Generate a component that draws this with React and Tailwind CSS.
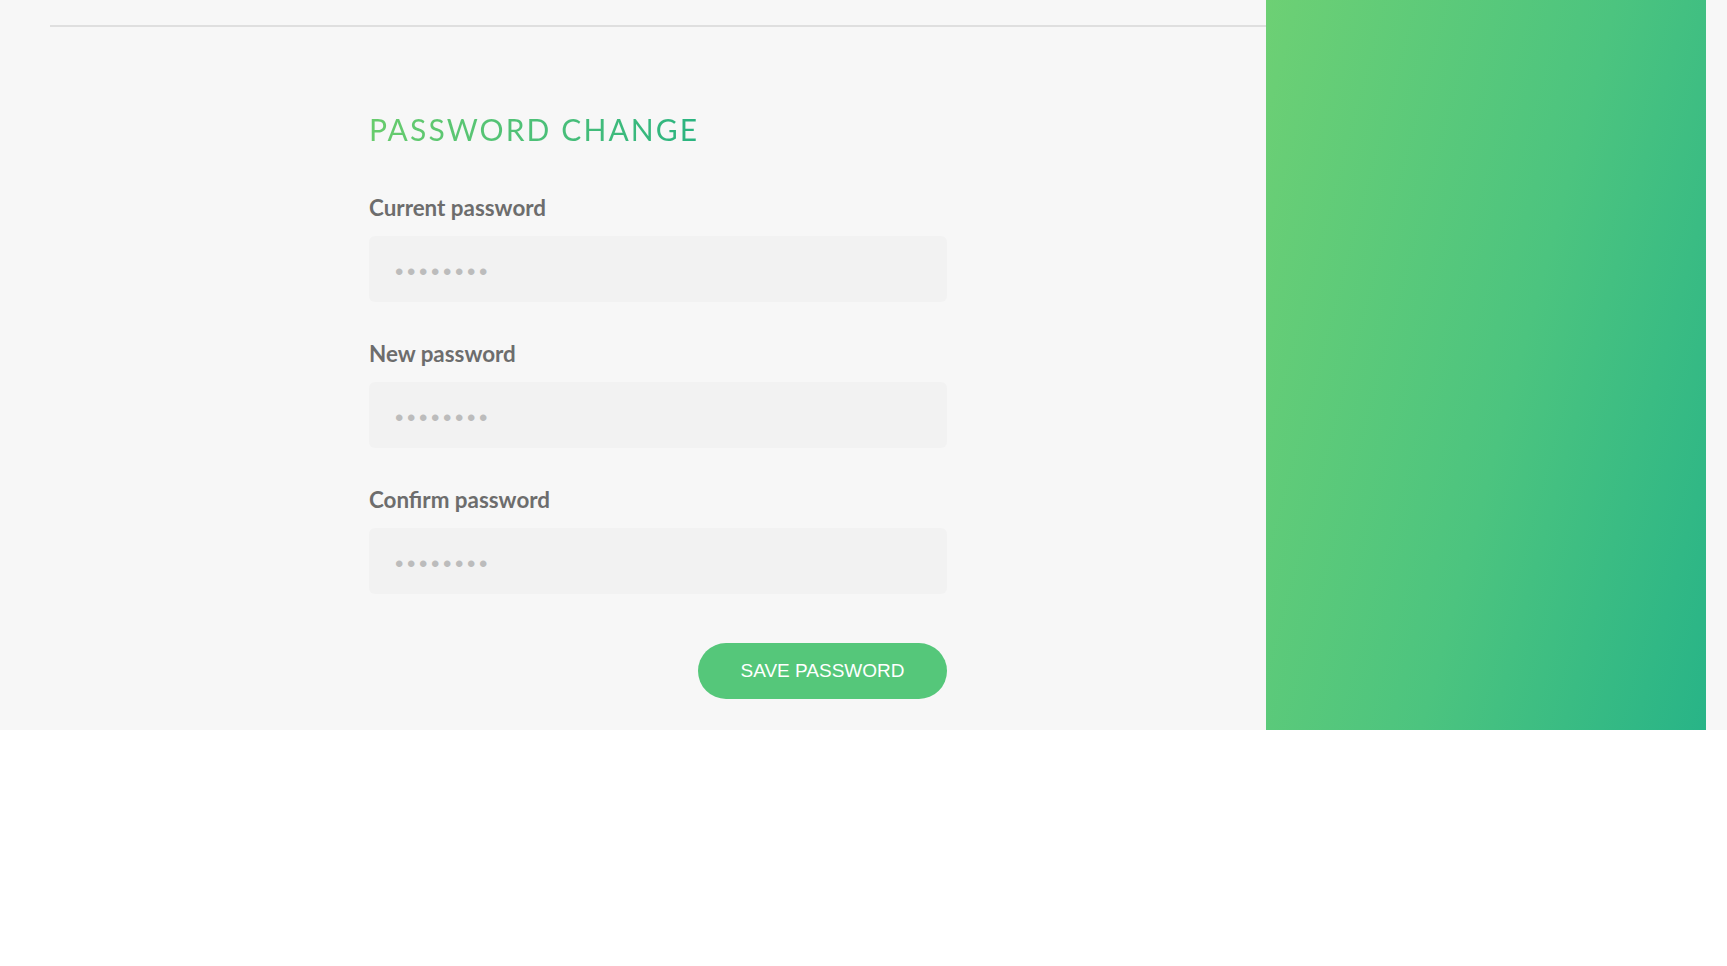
export default function App() {
  const fields = ["Current password", "New password", "Confirm password"];
  return (
    <div className="w-full bg-white" style={{ minHeight: 966 }}>
      <div className="flex h-[730px] w-full bg-[#f7f7f7]">
        <div className="flex-1 pl-[50px] pt-[25px]">
          <div className="border-t-2 border-[#dfdfdf] pl-[319px] pt-[84px]">
            <div className="w-[578px] font-['Lato',sans-serif]">
              <h1 className="inline-block bg-gradient-to-r from-[#68cc6c] to-[#29b480] bg-clip-text text-[30px] leading-[36px] font-normal tracking-[2.1px] text-transparent">
                PASSWORD CHANGE
              </h1>
              <div className="mt-[48px] flex flex-col gap-[39.2px]">
                {fields.map((f) => (
                  <div key={f} className="flex flex-col">
                    <label className="text-[22.4px] leading-[26px] font-bold text-[#6d6d6d]">{f}</label>
                    <input
                      type="text"
                      readOnly
                      placeholder="••••••••"
                      className="mt-[15px] h-[66px] w-full rounded-[6px] bg-[#f2f2f2] pl-[26px] pt-[5px] font-['Liberation_Sans',sans-serif] text-[24px] tracking-[3.6px] text-[#bcbcbc] outline-none placeholder:text-[#bcbcbc]"
                    />
                  </div>
                ))}
              </div>
              <div className="mt-[49px] flex justify-end">
                <button className="h-[56px] w-[249px] rounded-full bg-[#55c77a] font-['Liberation_Sans',Arial,sans-serif] text-[19px] text-white">
                  SAVE PASSWORD
                </button>
              </div>
            </div>
          </div>
        </div>
        <div className="h-full w-[440px] bg-[linear-gradient(105deg,#6dd074_0%,#4cc47f_55%,#28b487_100%)]" />
        <div className="w-[21px]" />
      </div>
    </div>
  );
}
